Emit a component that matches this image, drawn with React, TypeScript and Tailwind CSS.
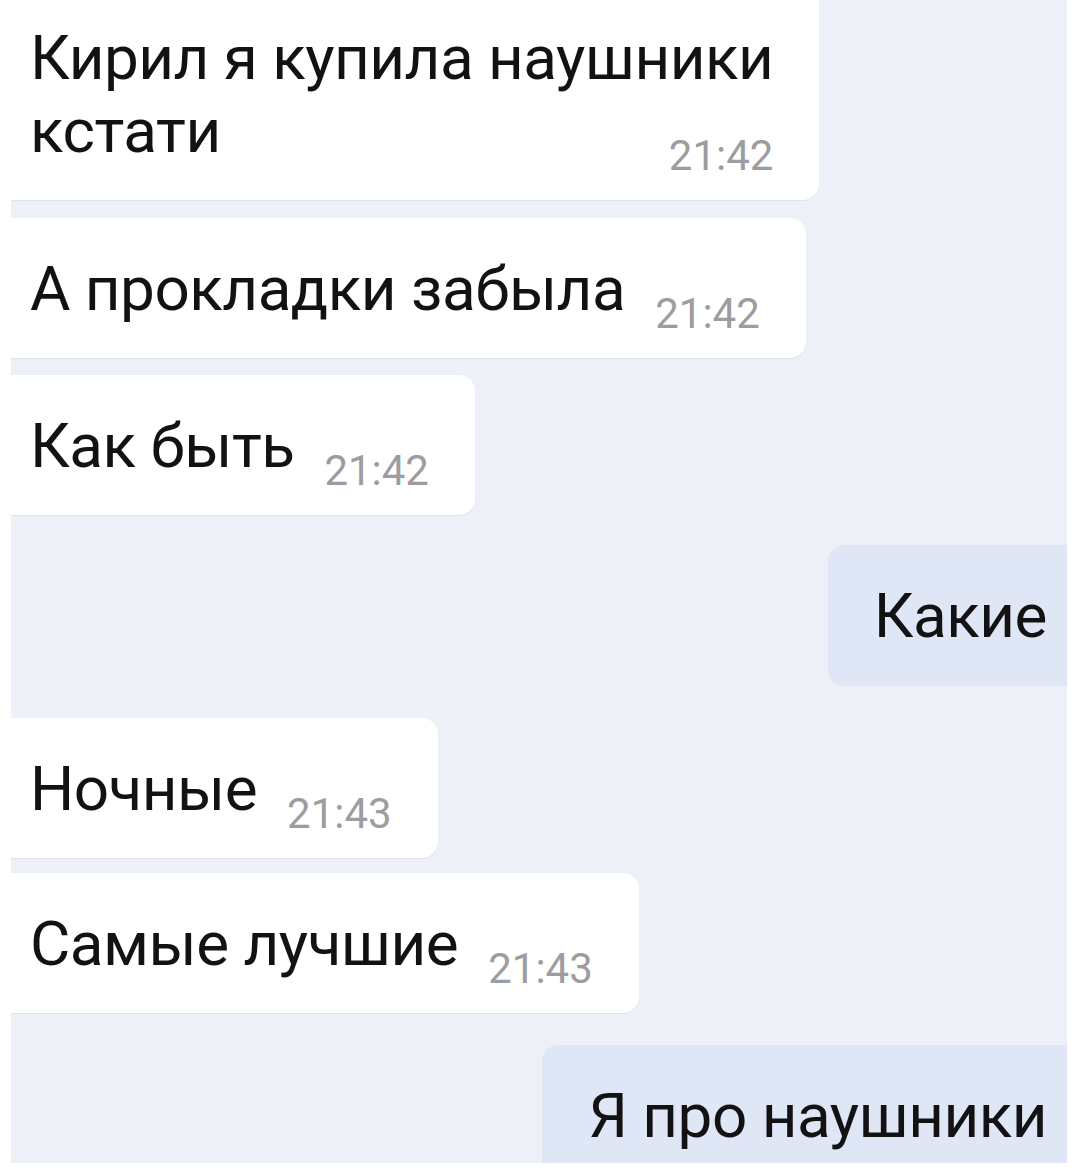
import React from "react";

type Msg = {
  out?: boolean;
  lines: string[];
  time?: string;
  gap: string;
};

const messages: Msg[] = [
  { lines: ["Кирил я купила наушники", "кстати"], time: "21:42", gap: "mt-[-13px]" },
  { lines: ["А прокладки забыла"], time: "21:42", gap: "mt-[18px]" },
  { lines: ["Как быть"], time: "21:42", gap: "mt-[17px]" },
  { out: true, lines: ["Какие"], gap: "mt-[30px]" },
  { lines: ["Ночные"], time: "21:43", gap: "mt-[33px]" },
  { lines: ["Самые лучшие"], time: "21:43", gap: "mt-[15px]" },
  { out: true, lines: ["Я про наушники"], gap: "mt-[32px]" },
];

function Time({ value }: { value: string }) {
  return (
    <span className="ml-[30px] shrink-0 translate-y-[18px] text-[42px] leading-none tracking-normal text-[#9d9da1]">
      {value}
    </span>
  );
}

function Bubble({ msg }: { msg: Msg }) {
  if (msg.out) {
    return (
      <div className={"flex justify-end " + msg.gap}>
        <div className="rounded-l-[16px] bg-[#dfe6f6] pl-[46px] pr-[20px] pt-[34px] pb-[33px] shadow-[0_1px_1px_rgba(0,0,0,0.05)]">
          <p className="leading-[73px] whitespace-nowrap">{msg.lines[0]}</p>
        </div>
      </div>
    );
  }

  const lastIndex = msg.lines.length - 1;
  return (
    <div className={"flex " + msg.gap}>
      <div className="rounded-r-[16px] bg-white pl-[19px] pr-[46px] pt-[34px] pb-[33px] shadow-[0_1px_1px_rgba(0,0,0,0.06)]">
        {msg.lines.map((line, i) => (
          <div
            key={i}
            className={
              "flex items-baseline leading-[73px] whitespace-nowrap " +
              (i === lastIndex && lastIndex > 0 ? "justify-between" : "")
            }
          >
            <span>{line}</span>
            {i === lastIndex && msg.time && <Time value={msg.time} />}
          </div>
        ))}
      </div>
    </div>
  );
}

export default function App() {
  return (
    <div
      className="w-[1080px] h-[1176px] bg-white pl-[11px]"
      style={{ fontFamily: "Roboto, 'Noto Sans', sans-serif" }}
    >
      <div className="w-[1056px] h-[1163px] overflow-hidden bg-[#edf0f7] text-[62px] tracking-[-0.5px] text-[#121212]">
        {messages.map((m, i) => (
          <Bubble key={i} msg={m} />
        ))}
      </div>
    </div>
  );
}
